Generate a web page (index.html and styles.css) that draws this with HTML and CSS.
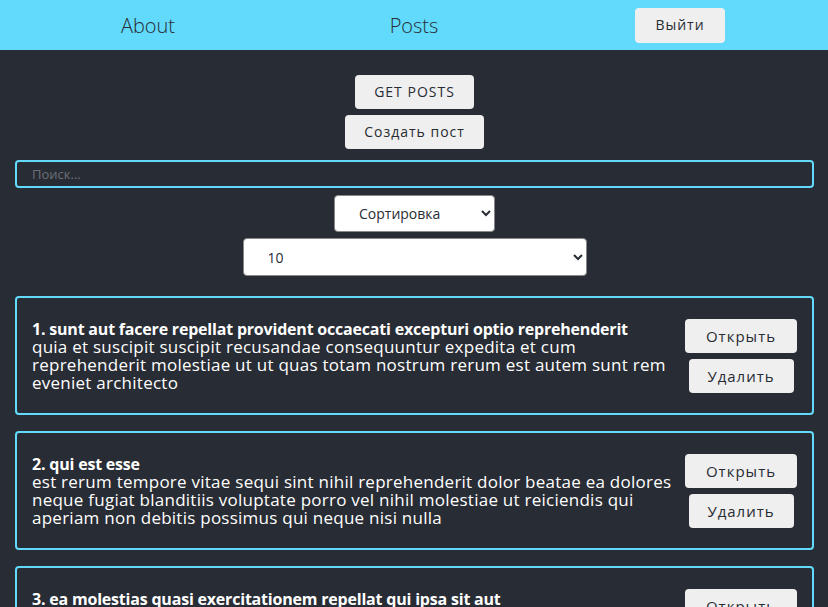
FILE: index.html
```html
<!DOCTYPE html>
<html lang="ru">
<head>
<meta charset="utf-8">
<title>Posts</title>
<link rel="stylesheet" href="styles.css">
</head>
<body>
<nav class="navbar">
  <div class="nav-cell"><a class="nav-link" href="#">About</a></div>
  <div class="nav-cell"><a class="nav-link" href="#">Posts</a></div>
  <div class="nav-cell"><button class="btn">Выйти</button></div>
</nav>
<main class="app">
  <div class="controls">
    <button class="btn">GET POSTS</button>
    <button class="btn">Создать пост</button>
    <input class="search" type="text" placeholder="Поиск...">
    <select class="select select-sort">
      <option>Сортировка</option>
    </select>
    <select class="select select-limit">
      <option>10</option>
    </select>
  </div>
  <div class="posts">
    <article class="post">
      <div class="post-content">
        <strong class="post-title">1. sunt aut facere repellat provident occaecati excepturi optio reprehenderit</strong>
        <div class="post-body">quia et suscipit suscipit recusandae consequuntur expedita et cum reprehenderit molestiae ut ut quas totam nostrum rerum est autem sunt rem eveniet architecto</div>
      </div>
      <div class="post-btns">
        <button class="btn">Открыть</button>
        <button class="btn">Удалить</button>
      </div>
    </article>
    <article class="post">
      <div class="post-content">
        <strong class="post-title">2. qui est esse</strong>
        <div class="post-body">est rerum tempore vitae sequi sint nihil reprehenderit dolor beatae ea dolores neque fugiat blanditiis voluptate porro vel nihil molestiae ut reiciendis qui aperiam non debitis possimus qui neque nisi nulla</div>
      </div>
      <div class="post-btns">
        <button class="btn">Открыть</button>
        <button class="btn">Удалить</button>
      </div>
    </article>
    <article class="post">
      <div class="post-content">
        <strong class="post-title">3. ea molestias quasi exercitationem repellat qui ipsa sit aut</strong>
        <div class="post-body">et iusto sed quo iure voluptatem occaecati omnis eligendi aut ad voluptatem doloribus vel accusantium quis pariatur molestiae porro eius odio et labore et velit aut</div>
      </div>
      <div class="post-btns">
        <button class="btn">Открыть</button>
        <button class="btn">Удалить</button>
      </div>
    </article>
  </div>
</main>
</body>
</html>
```
FILE: styles.css
```css
* { box-sizing: border-box; }
html, body { margin: 0; padding: 0; }
body {
  background: #282c34;
  color: #fff;
  font-family: "Open Sans", "Noto Sans", sans-serif;
  font-size: 16px;
  overflow: hidden;
}
.navbar {
  height: 50px;
  background: #61dafb;
  display: grid;
  grid-template-columns: 1fr 1fr 1fr;
  align-items: center;
  padding: 0 15px;
}
.nav-cell { display: flex; justify-content: center; }
.nav-link {
  color: #282c34;
  text-decoration: none;
  font-size: 20px;
  font-weight: 300;
}
.btn {
  font-family: "Open Sans", "Noto Sans", sans-serif;
  font-size: 14px;
  line-height: 18px;
  letter-spacing: 1px;
  color: #282c34;
  background: #efefef;
  border: none;
  border-radius: 4px;
  padding: 8px 19px;
  cursor: pointer;
}
.navbar .btn { width: 90px; height: 35px; padding: 0; }
.app { padding: 0 14px 0 15px; }
.controls {
  display: flex;
  flex-direction: column;
  align-items: center;
  padding-top: 25px;
}
.controls .btn + .btn { margin-top: 6px; }
.search {
  align-self: stretch;
  margin-top: 11px;
  height: 28px;
  border: 2px solid #61dafb;
  border-radius: 4px;
  background: #282c34;
  color: #fff;
  padding: 0 15px;
  font-family: "Open Sans", "Noto Sans", sans-serif;
  font-size: 13px;
  outline: none;
}
.search::placeholder { color: #6b6f76; }
.select {
  background: #fff;
  color: #282c34;
  border: 1px solid #888;
  border-radius: 4px;
  font-family: "Open Sans", "Noto Sans", sans-serif;
  font-size: 14px;
}
.select-sort {
  margin-top: 7px;
  width: 161px;
  height: 37px;
  padding: 0 6px 0 20px;
}
.select-limit {
  margin-top: 6px;
  width: 344px;
  height: 38px;
  padding: 0 6px 0 20px;
}
.posts {
  display: flex;
  flex-direction: column;
  gap: 16px;
  margin-top: 20px;
}
.post {
  display: flex;
  align-items: center;
  gap: 10px;
  border: 2px solid #61dafb;
  border-radius: 4px;
  padding: 21px 15px 20px;
}
.post-content {
  flex: 1;
  line-height: 18px;
}
.post-title {
  display: block;
  font-size: 16px;
  font-weight: 700;
  letter-spacing: -0.2px;
}
.post-body {
  font-size: 17px;
  letter-spacing: 0.25px;
}
.post-btns {
  display: flex;
  flex-direction: column;
  align-items: center;
  gap: 6px;
  width: 112px;
}
.post-btns .btn { font-size: 15px; padding: 8px 0; }
.post-btns .btn:first-child { width: 112px; }
.post-btns .btn:last-child { width: 105px; }
```
